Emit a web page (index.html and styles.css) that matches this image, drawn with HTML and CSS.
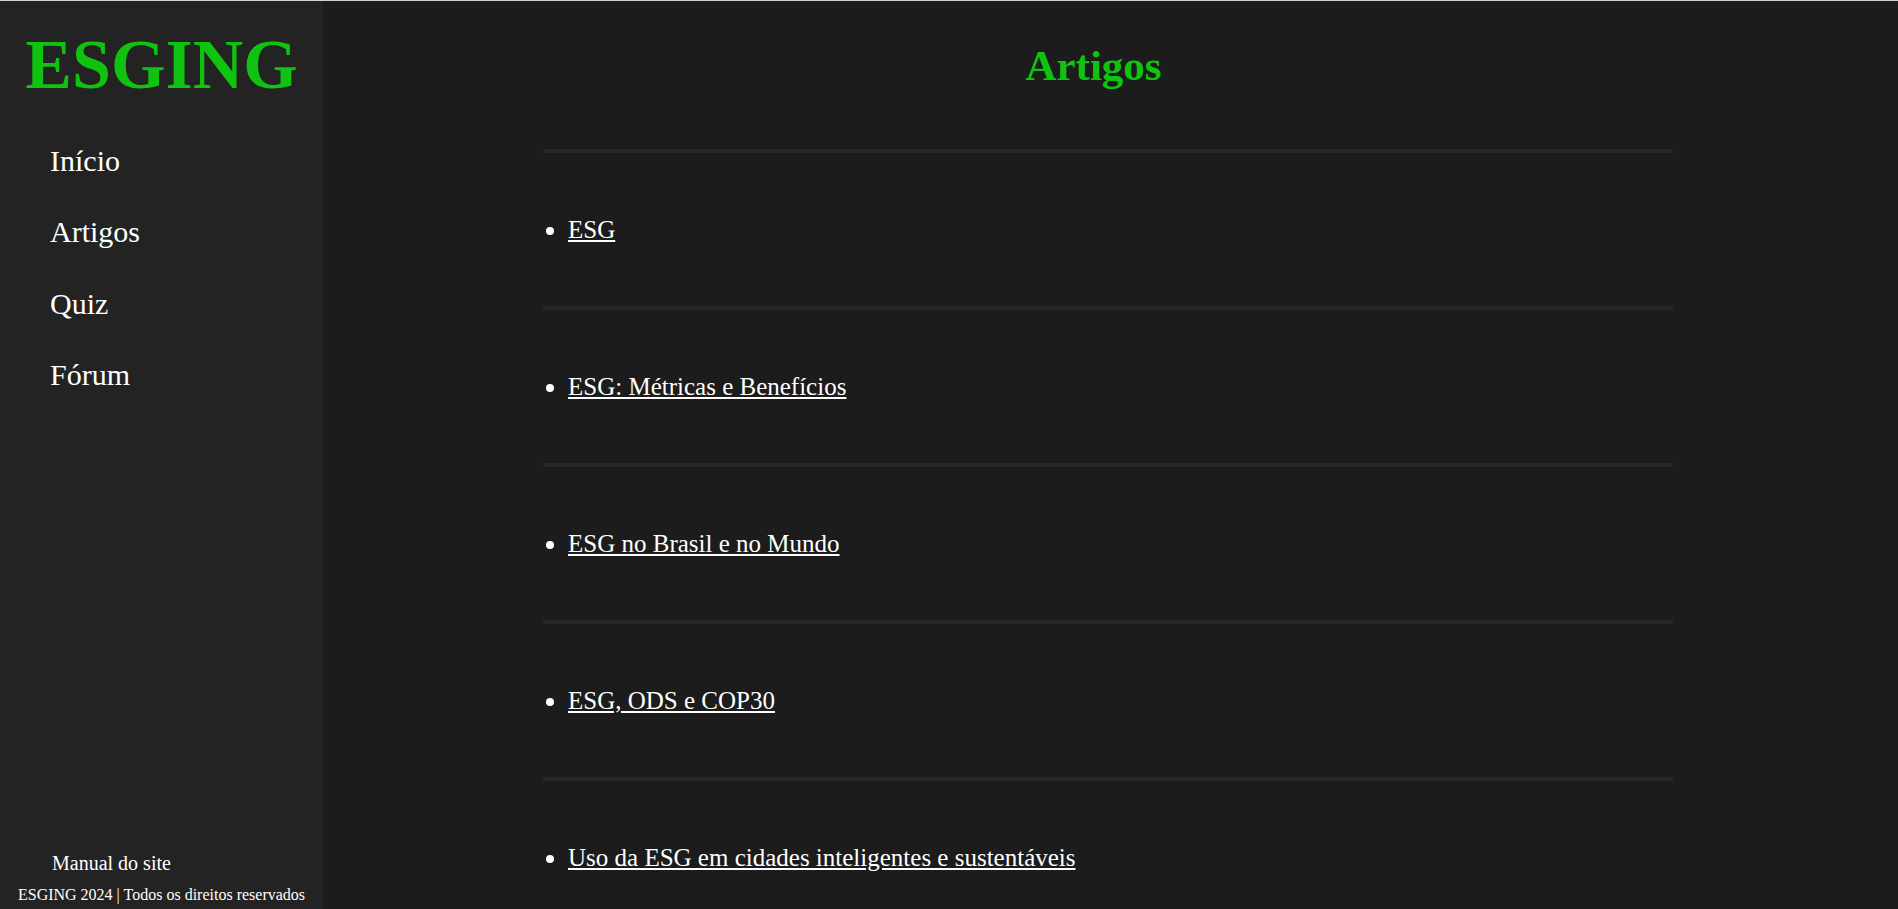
FILE: index.html
```html
<!DOCTYPE html>
<html lang="pt-BR">
<head>
<meta charset="utf-8">
<title>ESGING - Artigos</title>
<link rel="stylesheet" href="styles.css">
</head>
<body>
<div class="layout">
  <aside class="sidebar">
    <h1 class="logo">ESGING</h1>
    <nav>
      <ul class="nav-list">
        <li><a href="#">Início</a></li>
        <li><a href="#">Artigos</a></li>
        <li><a href="#">Quiz</a></li>
        <li><a href="#">Fórum</a></li>
      </ul>
    </nav>
    <div class="side-footer">
      <a class="manual" href="#">Manual do site</a>
      <p class="copy">ESGING 2024 | Todos os direitos reservados</p>
    </div>
  </aside>
  <main class="main">
    <h2 class="title">Artigos</h2>
    <ul class="articles">
      <li><a href="#">ESG</a></li>
      <li><a href="#">ESG: Métricas e Benefícios</a></li>
      <li><a href="#">ESG no Brasil e no Mundo</a></li>
      <li><a href="#">ESG, ODS e COP30</a></li>
      <li><a href="#">Uso da ESG em cidades inteligentes e sustentáveis</a></li>
    </ul>
  </main>
</div>
</body>
</html>
```

FILE: styles.css
```css
html, body {
  margin: 0;
  padding: 0;
}
body {
  height: 100vh;
  box-sizing: border-box;
  border-top: 1px solid #d2d2d2;
  background: #1c1c1c;
  color: #ffffff;
  font-family: "Liberation Serif", "Times New Roman", serif;
  overflow: hidden;
}
.layout {
  display: flex;
  height: 100%;
}
.sidebar {
  width: 323px;
  flex-shrink: 0;
  background: #232323;
  display: flex;
  flex-direction: column;
}
.logo {
  margin: 24px 0 0;
  font-size: 70px;
  line-height: 80px;
  font-weight: bold;
  color: #11c311;
  text-align: center;
}
.nav-list {
  list-style: none;
  margin: 20px 0 0;
  padding: 0 0 0 50px;
}
.nav-list li {
  line-height: 71.3px;
  font-size: 30px;
}
.nav-list a {
  color: #ffffff;
  text-decoration: none;
}
.side-footer {
  margin-top: auto;
  padding-bottom: 5px;
  display: flex;
  flex-direction: column;
}
.manual {
  padding-left: 52px;
  font-size: 20px;
  line-height: 23px;
  color: #ffffff;
  text-decoration: none;
}
.copy {
  margin: 11px 0 0;
  font-size: 16px;
  line-height: 18px;
  text-align: center;
}
.main {
  flex: 1;
  overflow: hidden;
}
.title {
  margin: 41px auto 0;
  width: 1130px;
  padding-right: 34px;
  box-sizing: border-box;
  font-size: 43px;
  line-height: 48px;
  font-weight: bold;
  color: #11c311;
  text-align: center;
}
.articles {
  width: 1130px;
  margin: 59px 0 0 220px;
  padding: 0;
  list-style: none;
}
.articles li {
  border-top: 4px solid #262626;
  padding: 62px 0 62px 3px;
  font-size: 25px;
  line-height: 29px;
}
.articles li::before {
  content: "";
  display: inline-block;
  width: 8px;
  height: 8px;
  margin-right: 14px;
  border-radius: 50%;
  background: #ffffff;
  vertical-align: 3.5px;
}
.articles a {
  color: #ffffff;
}
```
